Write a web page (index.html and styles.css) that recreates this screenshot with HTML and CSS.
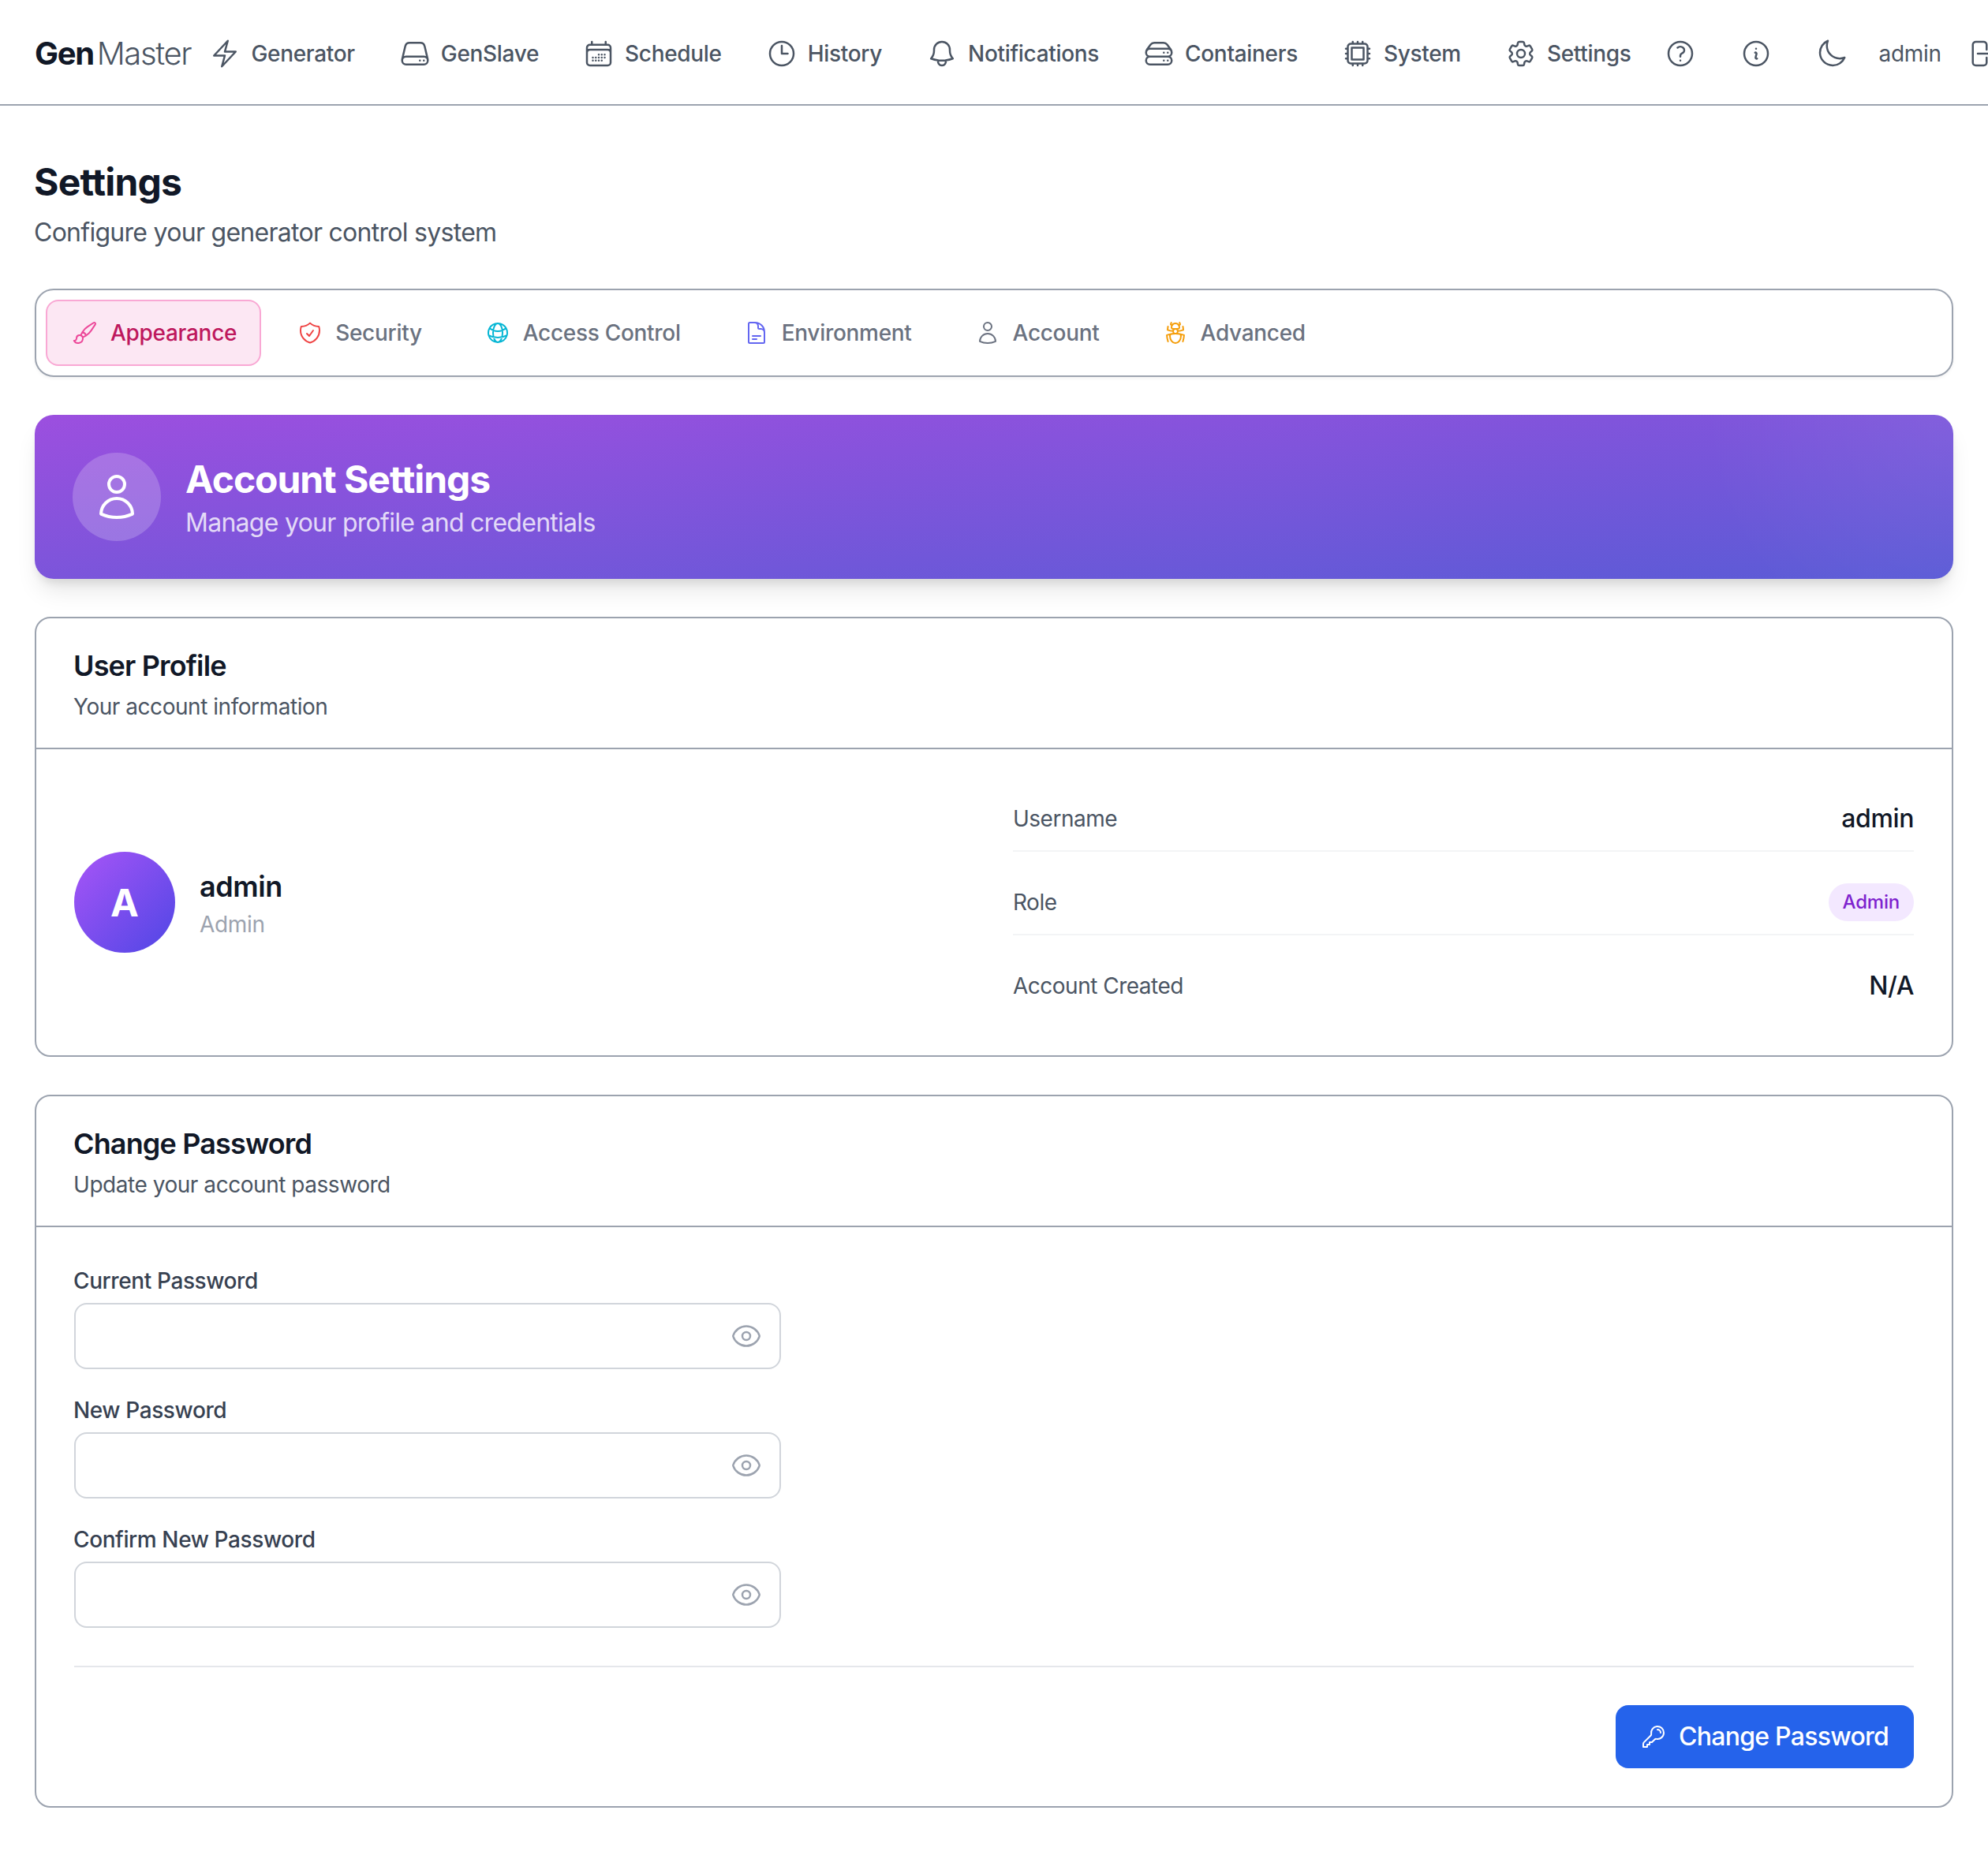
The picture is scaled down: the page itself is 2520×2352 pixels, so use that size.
FILE: index.html
```html
<!DOCTYPE html>
<html lang="en">
<head>
<meta charset="utf-8">
<title>GenMaster Settings</title>
<link rel="stylesheet" href="styles.css">
</head>
<body>
<header class="topbar">
  <div class="logo"><span class="logo-gen">Gen</span><span class="logo-master">Master</span></div>
  <nav class="nav">
    <a class="nav-item"><svg class="nav-icon" viewBox="0 0 24 24"><path d="m3.75 13.5 10.5-11.25L12 10.5h8.25L9.75 21.75 12 13.5H3.75Z"/></svg>Generator</a>
    <a class="nav-item"><svg class="nav-icon" viewBox="0 0 24 24"><path d="M21.75 17.25v-.228a4.5 4.5 0 0 0-.12-1.03l-2.268-9.64a3.375 3.375 0 0 0-3.285-2.602H7.923a3.375 3.375 0 0 0-3.285 2.602l-2.268 9.64a4.5 4.5 0 0 0-.12 1.03v.228m19.5 0a3 3 0 0 1-3 3H5.25a3 3 0 0 1-3-3m19.5 0a3 3 0 0 0-3-3H5.25a3 3 0 0 0-3 3m16.5 0h.008v.008h-.008v-.008Zm-3 0h.008v.008h-.008v-.008Z"/></svg>GenSlave</a>
    <a class="nav-item"><svg class="nav-icon" viewBox="0 0 24 24"><path d="M6.75 3v2.25M17.25 3v2.25M3 18.75V7.5a2.25 2.25 0 0 1 2.25-2.25h13.5A2.25 2.25 0 0 1 21 7.5v11.25m-18 0A2.25 2.25 0 0 0 5.25 21h13.5A2.25 2.25 0 0 0 21 18.75m-18 0v-7.5A2.25 2.25 0 0 1 5.25 9h13.5A2.25 2.25 0 0 1 21 11.25v7.5m-9-6h.008v.008H12v-.008ZM12 15h.008v.008H12V15Zm0 2.25h.008v.008H12v-.008ZM9.75 15h.008v.008H9.75V15Zm0 2.25h.008v.008H9.75v-.008ZM7.5 15h.008v.008H7.5V15Zm0 2.25h.008v.008H7.5v-.008Zm6.75-4.5h.008v.008h-.008v-.008Zm0 2.25h.008v.008h-.008V15Zm0 2.25h.008v.008h-.008v-.008Zm2.25-4.5h.008v.008H16.5v-.008Zm0 2.25h.008v.008H16.5V15Z"/></svg>Schedule</a>
    <a class="nav-item"><svg class="nav-icon" viewBox="0 0 24 24"><path d="M12 6v6h4.5m4.5 0a9 9 0 1 1-18 0 9 9 0 0 1 18 0Z"/></svg>History</a>
    <a class="nav-item"><svg class="nav-icon" viewBox="0 0 24 24"><path d="M14.857 17.082a23.848 23.848 0 0 0 5.454-1.31A8.967 8.967 0 0 1 18 9.75V9A6 6 0 0 0 6 9v.75a8.967 8.967 0 0 1-2.312 6.022c1.733.64 3.56 1.085 5.455 1.31m5.714 0a24.255 24.255 0 0 1-5.714 0m5.714 0a3 3 0 1 1-5.714 0"/></svg>Notifications</a>
    <a class="nav-item"><svg class="nav-icon" viewBox="0 0 24 24"><path d="M5.25 14.25h13.5m-13.5 0a3 3 0 0 1-3-3m3 3a3 3 0 1 0 0 6h13.5a3 3 0 1 0 0-6m-16.5-3a3 3 0 0 1 3-3h13.5a3 3 0 0 1 3 3m-19.5 0a4.5 4.5 0 0 1 .9-2.7L5.737 5.1a3.375 3.375 0 0 1 2.7-1.35h7.126c1.062 0 2.062.5 2.7 1.35l2.587 3.45a4.5 4.5 0 0 1 .9 2.7m0 0a3 3 0 0 1-3 3m0 3h.008v.008h-.008v-.008Zm0-6h.008v.008h-.008v-.008Zm-3 6h.008v.008h-.008v-.008Zm0-6h.008v.008h-.008v-.008Z"/></svg>Containers</a>
    <a class="nav-item"><svg class="nav-icon" viewBox="0 0 24 24"><path d="M8.25 3v1.5M4.5 8.25H3m18 0h-1.5M4.5 12H3m18 0h-1.5m-15 3.75H3m18 0h-1.5M8.25 19.5V21M12 3v1.5m0 15V21m3.75-18v1.5m0 15V21m-9-1.5h10.5a2.25 2.25 0 0 0 2.25-2.25V6.75a2.25 2.25 0 0 0-2.25-2.25H6.75A2.25 2.25 0 0 0 4.5 6.75v10.5a2.25 2.25 0 0 0 2.25 2.25Zm.75-12h9v9h-9v-9Z"/></svg>System</a>
    <a class="nav-item"><svg class="nav-icon" viewBox="0 0 24 24"><path d="M9.594 3.94c.09-.542.56-.94 1.11-.94h2.593c.55 0 1.02.398 1.11.94l.213 1.281c.063.374.313.686.645.87.074.04.147.083.22.127.325.196.72.257 1.075.124l1.217-.456a1.125 1.125 0 0 1 1.37.49l1.296 2.247a1.125 1.125 0 0 1-.26 1.431l-1.003.827c-.293.241-.438.613-.43.992a7.723 7.723 0 0 1 0 .255c-.008.378.137.75.43.991l1.004.827c.424.35.534.955.26 1.43l-1.298 2.247a1.125 1.125 0 0 1-1.369.491l-1.217-.456c-.355-.133-.75-.072-1.076.124a6.47 6.47 0 0 1-.22.128c-.331.183-.581.495-.644.869l-.213 1.281c-.09.543-.56.94-1.11.94h-2.594c-.55 0-1.019-.398-1.11-.94l-.213-1.281c-.062-.374-.312-.686-.644-.87a6.52 6.52 0 0 1-.22-.127c-.325-.196-.72-.257-1.076-.124l-1.217.456a1.125 1.125 0 0 1-1.369-.49l-1.297-2.247a1.125 1.125 0 0 1 .26-1.431l1.004-.827c.292-.24.437-.613.43-.991a6.932 6.932 0 0 1 0-.255c.007-.38-.138-.751-.43-.992l-1.004-.827a1.125 1.125 0 0 1-.26-1.43l1.297-2.247a1.125 1.125 0 0 1 1.37-.491l1.216.456c.356.133.751.072 1.076-.124.072-.044.146-.086.22-.128.332-.183.582-.495.644-.869l.214-1.28Z"/><path d="M15 12a3 3 0 1 1-6 0 3 3 0 0 1 6 0Z"/></svg>Settings</a>
  </nav>
  <div class="actions">
    <svg class="nav-icon" viewBox="0 0 24 24"><path d="M9.879 7.519c1.171-1.025 3.071-1.025 4.242 0 1.172 1.025 1.172 2.687 0 3.712-.203.179-.43.326-.67.442-.745.361-1.45.999-1.45 1.827v.75M21 12a9 9 0 1 1-18 0 9 9 0 0 1 18 0Zm-9 5.25h.008v.008H12v-.008Z"/></svg>
    <svg class="nav-icon" viewBox="0 0 24 24"><path d="m11.25 11.25.041-.02a.75.75 0 0 1 1.063.852l-.708 2.836a.75.75 0 0 0 1.063.853l.041-.021M21 12a9 9 0 1 1-18 0 9 9 0 0 1 18 0Zm-9-3.75h.008v.008H12V8.25Z"/></svg>
    <svg class="nav-icon" viewBox="0 0 24 24"><path d="M21.752 15.002A9.72 9.72 0 0 1 18 15.75c-5.385 0-9.75-4.365-9.75-9.75 0-1.33.266-2.597.748-3.752A9.753 9.753 0 0 0 3 11.25C3 16.635 7.365 21 12.75 21a9.753 9.753 0 0 0 9.002-5.998Z"/></svg>
  </div>
  <div class="user">
    <span class="user-name">admin</span>
    <svg class="nav-icon" viewBox="0 0 24 24"><path d="M15.75 9V5.25A2.25 2.25 0 0 0 13.5 3h-6a2.25 2.25 0 0 0-2.25 2.25v13.5A2.25 2.25 0 0 0 7.5 21h6a2.25 2.25 0 0 0 2.25-2.25V15m3 0 3-3m0 0-3-3m3 3H9"/></svg>
  </div>
</header>

<main class="page">
  <h1 class="page-title">Settings</h1>
  <p class="page-sub">Configure your generator control system</p>

  <div class="tabs">
    <a class="tab tab-active"><svg class="tab-icon icon-pink" viewBox="0 0 24 24"><path d="M9.53 16.122a3 3 0 0 0-5.78 1.128 2.25 2.25 0 0 1-2.4 2.245 4.5 4.5 0 0 0 8.4-2.245c0-.399-.078-.78-.22-1.128Zm0 0a15.998 15.998 0 0 0 3.388-1.62m-5.043-.025a15.994 15.994 0 0 1 1.622-3.395m3.42 3.42a15.995 15.995 0 0 0 4.764-4.648l3.876-5.814a1.151 1.151 0 0 0-1.597-1.597L14.146 6.32a15.996 15.996 0 0 0-4.649 4.763m3.42 3.42a6.776 6.776 0 0 0-3.42-3.42"/></svg>Appearance</a>
    <a class="tab"><svg class="tab-icon icon-red" viewBox="0 0 24 24"><path d="M9 12.75 11.25 15 15 9.75m-3-7.036A11.959 11.959 0 0 1 3.598 6 11.99 11.99 0 0 0 3 9.749c0 5.592 3.824 10.29 9 11.623 5.176-1.332 9-6.03 9-11.622 0-1.31-.21-2.571-.598-3.751h-.152c-3.196 0-6.1-1.248-8.25-3.285Z"/></svg>Security</a>
    <a class="tab"><svg class="tab-icon icon-cyan" viewBox="0 0 24 24"><path d="M12 21a9.004 9.004 0 0 0 8.716-6.747M12 21a9.004 9.004 0 0 1-8.716-6.747M12 21c2.485 0 4.5-4.03 4.5-9S14.485 3 12 3m0 18c-2.485 0-4.5-4.03-4.5-9S9.515 3 12 3m0 0a8.997 8.997 0 0 1 7.843 4.582M12 3a8.997 8.997 0 0 0-7.843 4.582m15.686 0A11.953 11.953 0 0 1 12 10.5c-2.998 0-5.74-1.1-7.843-2.918m15.686 0A8.959 8.959 0 0 1 21 12c0 .778-.099 1.533-.284 2.253m0 0A17.919 17.919 0 0 1 12 16.5c-3.162 0-6.133-.815-8.716-2.247m0 0A9.015 9.015 0 0 1 3 12c0-1.605.42-3.113 1.157-4.418"/></svg>Access Control</a>
    <a class="tab"><svg class="tab-icon icon-indigo" viewBox="0 0 24 24"><path d="M19.5 14.25v-2.625a3.375 3.375 0 0 0-3.375-3.375h-1.5A1.125 1.125 0 0 1 13.5 7.125v-1.5a3.375 3.375 0 0 0-3.375-3.375H8.25m0 12.75h7.5m-7.5 3H12M10.5 2.25H5.625c-.621 0-1.125.504-1.125 1.125v17.25c0 .621.504 1.125 1.125 1.125h12.75c.621 0 1.125-.504 1.125-1.125V11.25a9 9 0 0 0-9-9Z"/></svg>Environment</a>
    <a class="tab"><svg class="tab-icon icon-gray" viewBox="0 0 24 24"><path d="M15.75 6a3.75 3.75 0 1 1-7.5 0 3.75 3.75 0 0 1 7.5 0ZM4.501 20.118a7.5 7.5 0 0 1 14.998 0A17.933 17.933 0 0 1 12 21.75c-2.676 0-5.216-.584-7.499-1.632Z"/></svg>Account</a>
    <a class="tab"><svg class="tab-icon icon-amber" viewBox="0 0 24 24"><path d="M12 12.75c1.148 0 2.278.08 3.383.237 1.037.146 1.866.966 1.866 2.013 0 3.728-2.35 6.75-5.25 6.75S6.75 18.728 6.75 15c0-1.046.83-1.867 1.866-2.013A24.204 24.204 0 0 1 12 12.75Zm0 0c2.883 0 5.647.508 8.207 1.44a23.91 23.91 0 0 1-1.152 6.06M12 12.75c-2.883 0-5.647.508-8.208 1.44.125 2.104.52 4.136 1.153 6.06M12 12.75a2.25 2.25 0 0 0 2.248-2.354M12 12.75a2.25 2.25 0 0 1-2.248-2.354M12 8.25c.995 0 1.971-.08 2.922-.236.403-.066.74-.358.795-.762a3.778 3.778 0 0 0-.399-2.25M12 8.25c-.995 0-1.97-.08-2.922-.236-.402-.066-.74-.358-.795-.762a3.734 3.734 0 0 1 .4-2.253M12 8.25a2.25 2.25 0 0 0-2.248 2.146M12 8.25a2.25 2.25 0 0 1 2.248 2.146M8.683 5a6.032 6.032 0 0 1-1.155-1.002c.07-.63.27-1.222.574-1.747m.581 2.749A3.75 3.75 0 0 1 15.318 5m0 0c.427-.283.815-.62 1.155-.999a4.471 4.471 0 0 0-.575-1.752M4.921 6a24.048 24.048 0 0 0-.392 3.314c1.668.546 3.416.914 5.223 1.082M19.08 6c.205 1.08.337 2.187.392 3.314a23.882 23.882 0 0 1-5.223 1.082"/></svg>Advanced</a>
  </div>

  <section class="banner">
    <div class="banner-badge"><svg class="banner-icon" viewBox="0 0 24 24"><path d="M15.75 6a3.75 3.75 0 1 1-7.5 0 3.75 3.75 0 0 1 7.5 0ZM4.501 20.118a7.5 7.5 0 0 1 14.998 0A17.933 17.933 0 0 1 12 21.75c-2.676 0-5.216-.584-7.499-1.632Z"/></svg></div>
    <div class="banner-text">
      <h2 class="banner-title">Account Settings</h2>
      <p class="banner-sub">Manage your profile and credentials</p>
    </div>
  </section>

  <section class="card">
    <div class="card-head">
      <h3 class="card-title">User Profile</h3>
      <p class="card-sub">Your account information</p>
    </div>
    <div class="profile">
      <div class="identity">
        <div class="avatar">A</div>
        <div>
          <div class="identity-name">admin</div>
          <div class="identity-role">Admin</div>
        </div>
      </div>
      <dl class="facts">
        <div class="fact"><dt class="fact-label">Username</dt><dd class="fact-value">admin</dd></div>
        <div class="fact"><dt class="fact-label">Role</dt><dd class="fact-value"><span class="badge">Admin</span></dd></div>
        <div class="fact fact-last"><dt class="fact-label">Account Created</dt><dd class="fact-value">N/A</dd></div>
      </dl>
    </div>
  </section>

  <section class="card">
    <div class="card-head">
      <h3 class="card-title">Change Password</h3>
      <p class="card-sub">Update your account password</p>
    </div>
    <form class="pw-form">
      <div class="field">
        <label class="field-label">Current Password</label>
        <div class="input-wrap">
          <input class="input" type="password">
          <svg class="eye" viewBox="0 0 24 24"><path d="M2.036 12.322a1.012 1.012 0 0 1 0-.639C3.423 7.51 7.36 4.5 12 4.5c4.638 0 8.573 3.007 9.963 7.178.07.207.07.431 0 .639C20.577 16.49 16.64 19.5 12 19.5c-4.638 0-8.573-3.007-9.963-7.178Z"/><path d="M15 12a3 3 0 1 1-6 0 3 3 0 0 1 6 0Z"/></svg>
        </div>
      </div>
      <div class="field">
        <label class="field-label">New Password</label>
        <div class="input-wrap">
          <input class="input" type="password">
          <svg class="eye" viewBox="0 0 24 24"><path d="M2.036 12.322a1.012 1.012 0 0 1 0-.639C3.423 7.51 7.36 4.5 12 4.5c4.638 0 8.573 3.007 9.963 7.178.07.207.07.431 0 .639C20.577 16.49 16.64 19.5 12 19.5c-4.638 0-8.573-3.007-9.963-7.178Z"/><path d="M15 12a3 3 0 1 1-6 0 3 3 0 0 1 6 0Z"/></svg>
        </div>
      </div>
      <div class="field">
        <label class="field-label">Confirm New Password</label>
        <div class="input-wrap">
          <input class="input" type="password">
          <svg class="eye" viewBox="0 0 24 24"><path d="M2.036 12.322a1.012 1.012 0 0 1 0-.639C3.423 7.51 7.36 4.5 12 4.5c4.638 0 8.573 3.007 9.963 7.178.07.207.07.431 0 .639C20.577 16.49 16.64 19.5 12 19.5c-4.638 0-8.573-3.007-9.963-7.178Z"/><path d="M15 12a3 3 0 1 1-6 0 3 3 0 0 1 6 0Z"/></svg>
        </div>
      </div>
      <div class="form-foot">
        <button class="btn" type="button"><svg class="btn-icon" viewBox="0 0 24 24"><path d="M15.75 5.25a3 3 0 0 1 3 3m3 0a6 6 0 0 1-7.029 5.912c-.563-.097-1.159.026-1.563.43L10.5 17.25H8.25v2.25H6v2.25H2.25v-2.818c0-.597.237-1.17.659-1.591l6.499-6.499c.404-.404.527-1 .43-1.563A6 6 0 1 1 21.75 8.25Z"/></svg>Change Password</button>
      </div>
    </form>
  </section>
</main>
</body>
</html>
```
FILE: styles.css
```css
* { box-sizing: border-box; }
html, body { margin: 0; padding: 0; background: #fff; overflow-x: hidden; }
body { font-family: Inter, "Liberation Sans", sans-serif; color: #111827; }
svg { fill: none; stroke: currentColor; stroke-width: 1.5; stroke-linecap: round; stroke-linejoin: round; flex: none; display: block; }
h1, h2, h3, p, dl, dd, dt { margin: 0; font-weight: inherit; }

.topbar { display: flex; align-items: center; height: 134px; padding-left: 44px; padding-top: 3px; border-bottom: 2px solid #9ca3af; overflow: hidden; white-space: nowrap; color: #4b5563; font-size: 28px; line-height: 40px; }
.logo { font-size: 40px; line-height: 56px; letter-spacing: -1.35px; flex: none; }
.logo-gen { font-weight: 700; color: #111827; margin-right: 4px; }
.logo-master { font-weight: 300; color: #4b5563; }
.nav { display: flex; gap: 56px; margin-left: 23px; flex: none; }
.nav-item { display: flex; align-items: center; gap: 13px; font-weight: 500; letter-spacing: -.32px; }
.nav-icon { width: 40px; height: 40px; }
.actions { display: flex; gap: 56px; margin-left: 42px; flex: none; }
.user { display: flex; align-items: center; gap: 31px; margin-left: 40px; flex: none; }
.user-name { letter-spacing: -.3px; }

.page { padding: 64px 44px 60px; }
.page-title { font-size: 48px; line-height: 64px; font-weight: 700; color: #111827; letter-spacing: -.8px; padding-top: 1px; margin-left: -1px; }
.page-sub { margin-top: 8px; margin-left: -1px; font-size: 32px; line-height: 48px; color: #4b5563; letter-spacing: -.72px; }

.tabs { display: flex; gap: 12px; margin-top: 47px; padding: 12px; background: #fff; border: 2px solid #9ca3af; border-radius: 24px; box-shadow: 0 2px 4px rgba(0,0,0,.05); }
.tab { display: flex; align-items: center; gap: 16px; padding: 20px 32px; font-size: 28px; line-height: 40px; font-weight: 500; color: #6b7280; border: 2px solid transparent; border-radius: 16px; letter-spacing: -.3px; }
.tab-active { padding-right: 29px; background: #fce7f3; border-color: #f9a8d4; color: #be185d; }
.tab-icon { width: 32px; height: 32px; }
.icon-pink { color: #ec4899; }
.icon-red { color: #ef4444; }
.icon-cyan { color: #06b6d4; }
.icon-indigo { color: #6366f1; }
.icon-gray { color: #6b7280; }
.icon-amber { color: #f59e0b; }

.banner { display: flex; align-items: center; gap: 32px; margin-top: 48px; padding: 48px; border-radius: 24px; background: radial-gradient(circle at 100% 0, rgba(255,255,255,.06), rgba(255,255,255,0) 320px), linear-gradient(to bottom right, #9c4fdf 0%, #5b5bd6 100%); color: #fff; box-shadow: 0 20px 30px -6px rgba(0,0,0,.1), 0 8px 12px -4px rgba(0,0,0,.1); }
.banner-badge { display: flex; align-items: center; justify-content: center; width: 112px; height: 112px; border-radius: 50%; background: rgba(255,255,255,.2); }
.banner-icon { width: 64px; height: 64px; }
.banner-text { margin-left: -1px; padding-top: 2px; }
.banner-title { font-size: 48px; line-height: 64px; font-weight: 700; letter-spacing: -1.05px; }
.banner-sub { font-size: 32px; line-height: 46px; color: rgba(255,255,255,.8); letter-spacing: -.72px; }

.card { margin-top: 48px; background: #fff; border: 2px solid #9ca3af; border-radius: 20px; }
.card-head { padding: 32px 48px; border-bottom: 2px solid #9ca3af; height: 166px; }
.card-title { font-size: 36px; line-height: 56px; font-weight: 600; color: #111827; letter-spacing: -.85px; margin-left: -1px; }
.card-sub { margin-top: 4px; margin-left: -1px; font-size: 28px; line-height: 40px; color: #4b5563; letter-spacing: -.46px; }

.profile { display: grid; grid-template-columns: 1fr 1fr; gap: 48px; padding: 64px 48px; }
.identity { display: flex; align-items: center; gap: 32px; }
.avatar { display: flex; align-items: center; justify-content: center; width: 128px; height: 128px; border-radius: 50%; background: linear-gradient(135deg, #a855f7, #4f46e5); color: #fff; font-size: 48px; font-weight: 700; }
.identity-name { font-size: 36px; line-height: 56px; font-weight: 600; color: #111827; letter-spacing: -.4px; margin-left: -1px; }
.identity-role { font-size: 28px; line-height: 40px; color: #9ca3af; letter-spacing: -.3px; margin-left: -1px; }
.facts { display: flex; flex-direction: column; gap: 40px; }
.fact { display: flex; align-items: center; justify-content: space-between; height: 66px; padding-bottom: 16px; border-bottom: 2px solid #f3f4f6; }
.fact-last { height: 48px; padding-bottom: 0; border-bottom: 0; }
.fact-label { font-size: 28px; line-height: 40px; color: #4b5563; letter-spacing: -.5px; }
.fact-value { font-size: 32px; line-height: 48px; font-weight: 500; color: #111827; letter-spacing: -.4px; }
.badge { display: block; padding: 8px 18px; border-radius: 999px; background: #f3e8ff; color: #7e22ce; font-size: 24px; line-height: 32px; letter-spacing: -.2px; }

.pw-form { display: flex; flex-direction: column; gap: 32px; padding: 48px; }
.field { width: 896px; }
.field-label { display: block; margin-bottom: 8px; margin-left: -1px; font-size: 28px; line-height: 40px; font-weight: 500; color: #374151; letter-spacing: -.4px; }
.input-wrap { position: relative; }
.input { display: block; width: 100%; height: 84px; padding: 0 80px 0 24px; border: 2px solid #d1d5db; border-radius: 16px; background: #fff; font: inherit; }
.eye { position: absolute; top: 22px; right: 24px; width: 40px; height: 40px; color: #9ca3af; }
.form-foot { display: flex; justify-content: flex-end; margin-top: 16px; padding-top: 48px; border-top: 2px solid #e5e7eb; }
.btn { display: flex; align-items: center; gap: 16px; height: 80px; padding: 0 32px; border: 0; border-radius: 16px; background: #2563eb; color: #fff; font-family: inherit; font-size: 32px; line-height: 48px; font-weight: 500; letter-spacing: -.75px; }
.btn-icon { width: 32px; height: 32px; }
```
